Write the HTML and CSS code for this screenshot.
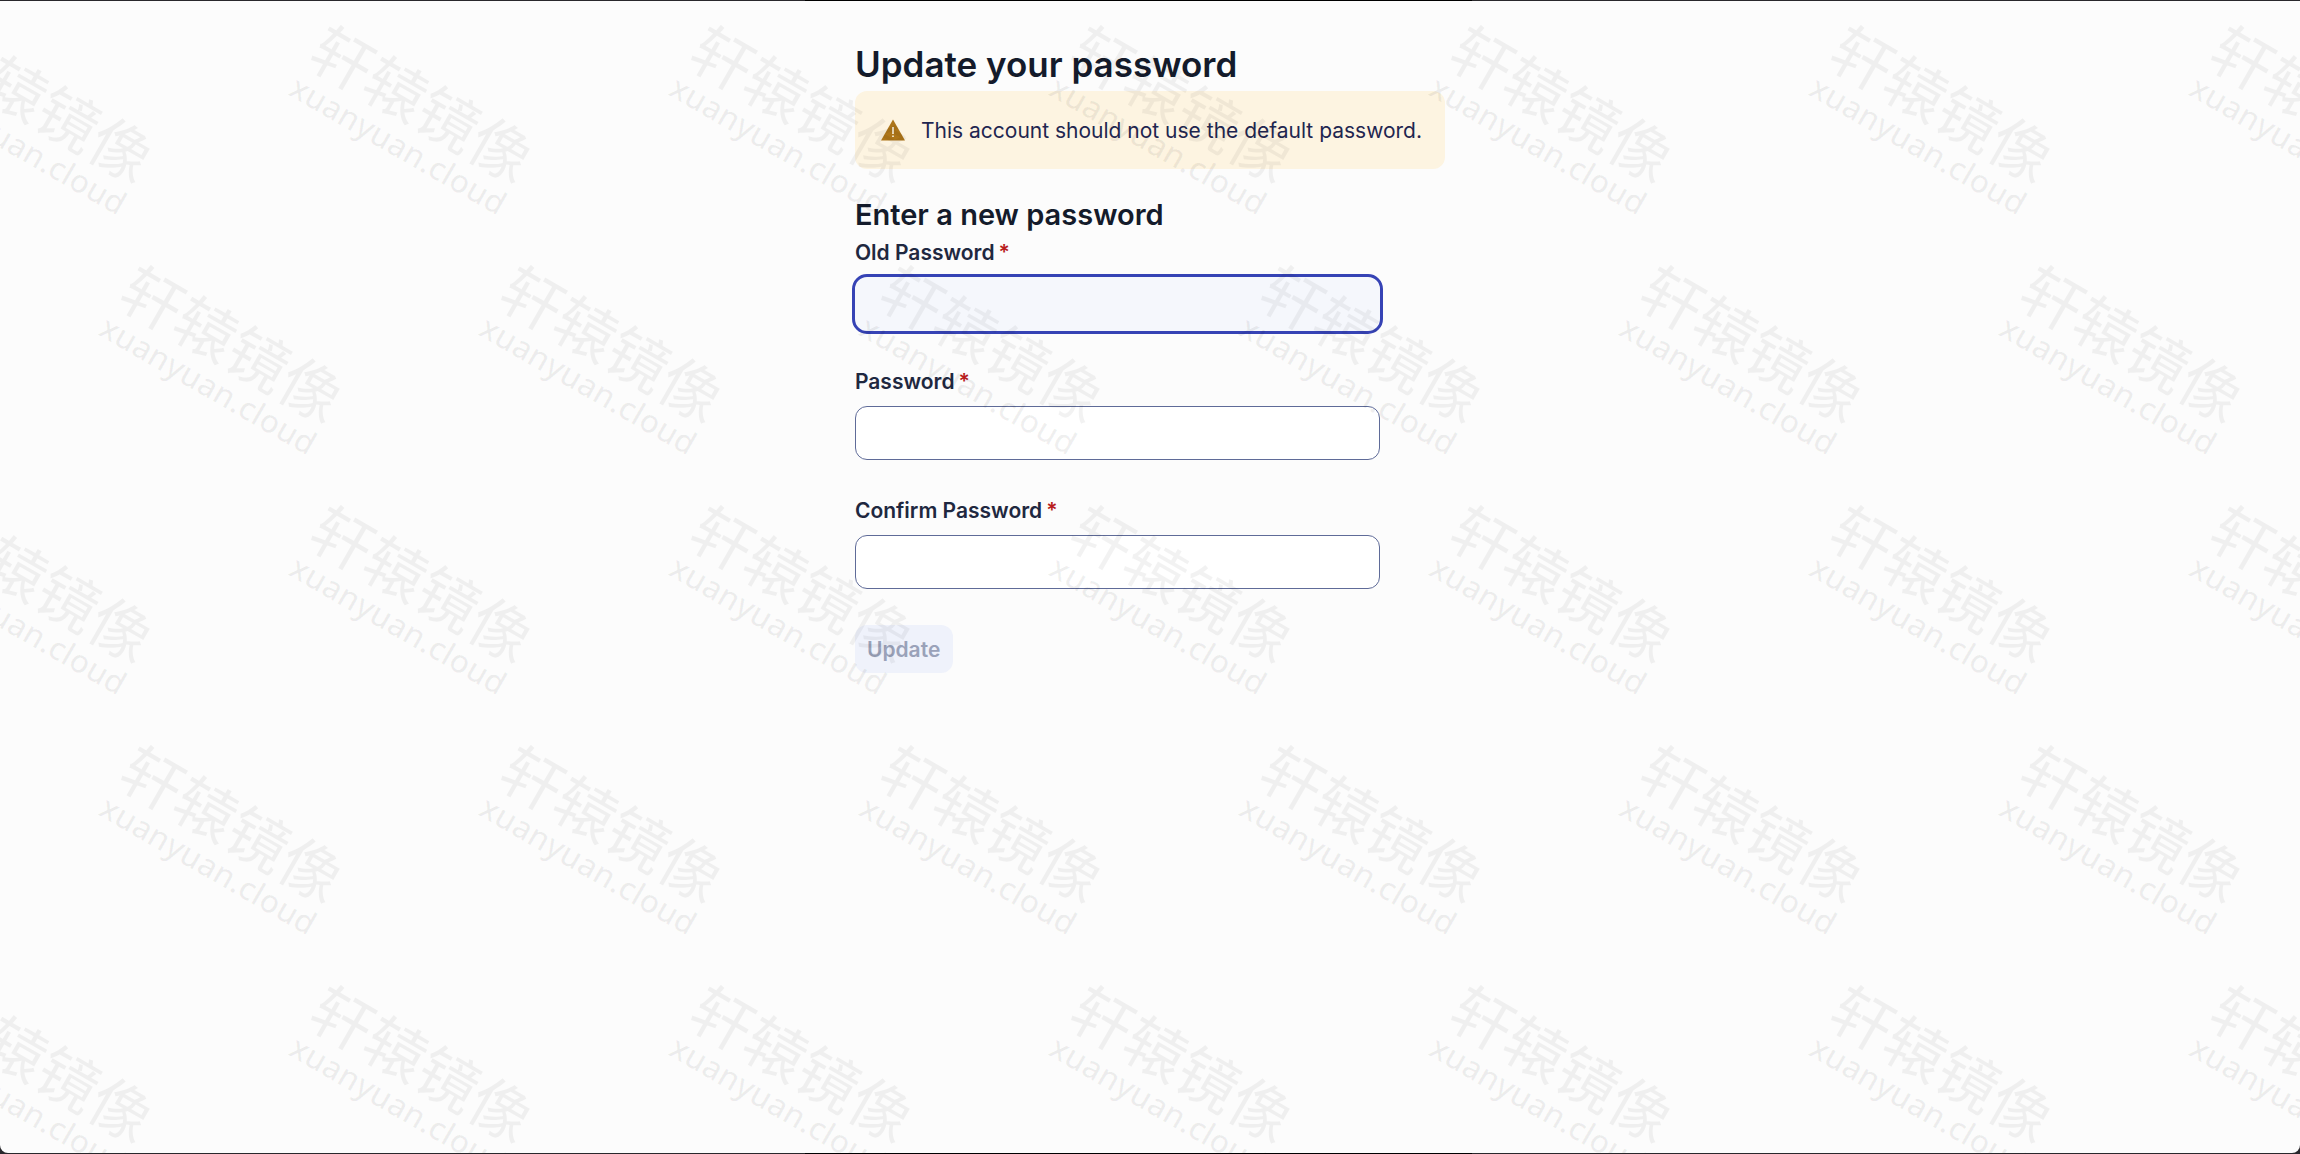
FILE: index.html
```html
<!DOCTYPE html>
<html lang="en">
<head>
    <meta charset="UTF-8">
    <meta name="viewport" content="width=device-width, initial-scale=1.0">
    <title>Update your password</title>
    <link rel="stylesheet" href="styles.css">
</head>

<body>
    <div class="page">
        <main class="content">
            <h1>Update your password</h1>

            <div class="alert" role="alert">
                <svg class="alert-icon" viewBox="0 0 24 22" aria-hidden="true">
                    <path d="M12 0.5 L24 21.5 H0 Z" fill="#ad7519"/>
                    <path d="M11.2 8 h1.6 v7 h-1.6 Z M11.2 16.5 h1.6 v1.6 h-1.6 Z" fill="#fdf4e1"/>
                </svg>
                <span>This account should not use the default password.</span>
            </div>

            <h2>Enter a new password</h2>

            <form class="password-form">
                <div class="field">
                    <label for="old-password">Old Password<span class="required">*</span></label>
                    <input type="password" id="old-password" class="active">
                </div>
                <div class="field">
                    <label for="password">Password<span class="required">*</span></label>
                    <input type="password" id="password">
                </div>
                <div class="field">
                    <label for="confirm-password">Confirm Password<span class="required">*</span></label>
                    <input type="password" id="confirm-password">
                </div>
                <button type="submit" class="update-button" disabled>Update</button>
            </form>
        </main>

        <div class="watermark" aria-hidden="true"></div>
    </div>

    <script>
        const watermark = document.querySelector('.watermark');

        // every second row is shifted by half a mark
        for (let r = 0; r < 5; r++) {
            const row = document.createElement('div');
            row.className = 'watermark-row';
            // the shifted rows need one mark less to fill the width
            const marks = r % 2 ? 6 : 7;
            for (let c = 0; c < marks; c++) {
                row.innerHTML += '<div class="mark"><div class="mark-text"><span class="mark-name">轩辕镜像</span><span class="mark-site">xuanyuan.cloud</span></div></div>';
            }
            watermark.appendChild(row);
        }
    </script>
</body>
</html>
```
FILE: styles.css
```css
* {
    box-sizing: border-box;
}

body {
    margin: 0;
    padding: 1px 0;
    background: linear-gradient(to right, #29282c 35%, #000 35%, #000 64%, #29282c 64%) #29282c;
    font-family: Inter, "Liberation Sans", sans-serif;
    color: #141b2b;
}

.page {
    position: relative;
    min-height: calc(100vh - 2px);
    overflow: hidden;
    background-color: #fcfcfc;
    border-radius: 0 0 8px 8px;
}

.content {
    width: fit-content;
    margin: 0 auto;
    padding-top: 38px;
}

h1 {
    margin: 0;
    padding-bottom: 2px;
    font-size: 35px;
    line-height: 50px;
    font-weight: 600;
}

h2 {
    margin: 26px 0 0;
    font-size: 29px;
    line-height: 40px;
    font-weight: 600;
}

.alert {
    display: flex;
    align-items: center;
    gap: 16px;
    height: 78px;
    padding: 0 23px 0 26px;
    border-radius: 12px;
    background-color: #fdf4e1;
    color: #1f2650;
    font-size: 21px;
}

.alert-icon {
    width: 24px;
    height: 22px;
}

.password-form {
    width: 525px;
}

.field {
    margin-bottom: 33px;
}

.field label {
    display: block;
    margin-bottom: 6px;
    font-size: 21px;
    line-height: 36px;
    font-weight: 600;
    color: #1f2840;
}

.required {
    margin-left: 4px;
    color: #b81c1c;
}

.field input {
    display: block;
    width: 100%;
    height: 54px;
    padding: 0 12px;
    border: 1px solid #5f6b98;
    border-radius: 12px;
    background-color: #fff;
    font: inherit;
    font-size: 21px;
}

.field input.active {
    border-color: #f5f7fc;
    outline: 3px solid #3643b5;
    background-color: #f5f7fc;
}

.update-button {
    height: 48px;
    margin-top: 3px;
    padding: 0 13px 0 12px;
    border: none;
    border-radius: 12px;
    background-color: #eff2fb;
    color: #9aa2b9;
    font-family: inherit;
    font-size: 21px;
    font-weight: 600;
}

/* watermark lies over the whole page */
.watermark {
    position: absolute;
    inset: -3px 0 0;
    overflow: hidden;
    pointer-events: none;
}

.watermark-row {
    display: flex;
    height: 240px;
    margin-left: -156px;
}

.watermark-row:nth-child(even) {
    margin-left: 34px;
}

.mark {
    display: flex;
    flex: 0 0 380px;
    align-items: center;
    justify-content: center;
}

.mark-text {
    display: flex;
    flex-direction: column;
    align-items: center;
    transform: rotate(30deg);
    color: rgba(0, 0, 0, 0.05);
    white-space: nowrap;
}

.mark-name {
    font-family: "Noto Sans CJK SC", sans-serif;
    font-size: 61px;
    line-height: 62px;
}

.mark-site {
    font-family: "Noto Sans", sans-serif;
    font-size: 32px;
    line-height: 38px;
    font-weight: 500;
    color: rgba(0, 0, 0, 0.06);
}
```
